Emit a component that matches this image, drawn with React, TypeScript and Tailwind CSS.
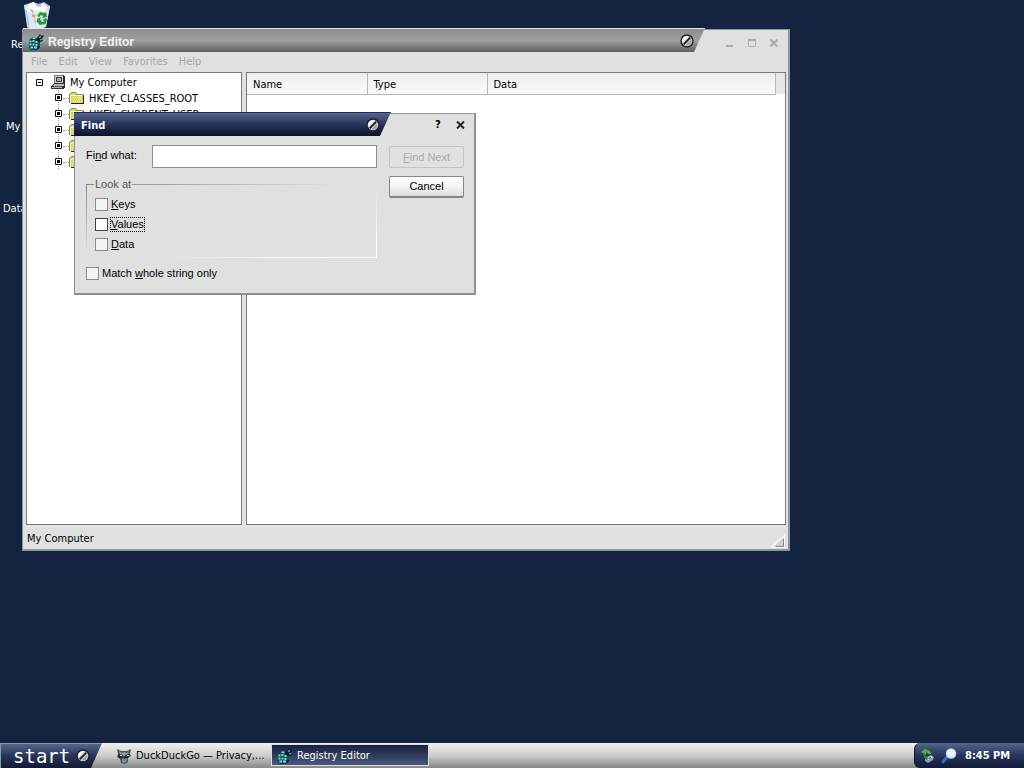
import React from 'react';

const hives = ['HKEY_CLASSES_ROOT', 'HKEY_CURRENT_USER', '', '', ''];

function RegistryIcon() {
  return (
    <svg width="16" height="16" viewBox="0 0 16 16" aria-hidden="true" className="shrink-0">
      <path d="M1 6l4-3 6 2v10l-2 1H3l-2-2z" fill="#0b4650" />
      <path d="M4.500 3.500h3v1.500h-3zM1.500 6.500h2v2h-2zM4.500 6h2v2h-2zM7.500 7h2v2h-2zM1.500 9.500h2v2h-2zM4.500 9.500h2v2h-2zM7.500 10h2v2h-2zM2.500 12.500h2.500v2H2.500zM6 12.500h3v2H6z" fill="#79e4e8" />
      <path d="M9 4l3-4 1 2 3-1-2 4 1 2-3 1v5l-2 2V7l-2-1z" fill="#0c1d24" />
      <path d="M11 4l1-2 1 1zM12 6l2-1v1zM11 8v4" fill="#7ad6da" stroke="#4fa9b0" strokeWidth=".7" />
    </svg>
  );
}

function SlashBadge() {
  return (
    <svg width="14" height="14" viewBox="0 0 14 14" aria-hidden="true" className="shrink-0">
      <circle cx="7" cy="7" r="6.700" fill="#1d2028" />
      <circle cx="7" cy="7" r="5.300" fill="#c9cccd" />
      <path d="M2.500 8.500a4.700 4.700 0 0 1 6-6z" fill="#fff" />
      <path d="M3.700 10.300l6.600-6.600" stroke="#16181f" strokeWidth="1.700" />
      <path d="M11.300 5.800a4.600 4.600 0 0 1-5.500 5.500z" fill="#9b9f9f" />
    </svg>
  );
}

function ComputerIcon() {
  return (
    <svg width="16" height="14" viewBox="0 0 16 14" shapeRendering="crispEdges" aria-hidden="true" className="shrink-0">
      <path d="M3 0h9l2 2v7h-1v1H3z" fill="#2b2b2b" />
      <path d="M3 0h9v1H4v7H3z" fill="#777" />
      <path d="M4 1h8v7H4z" fill="#d2d2ce" />
      <path d="M5 2h6v5H5z" fill="#3c4344" />
      <path d="M6 3h4v3H6z" fill="#a3adad" />
      <path d="M2 9h12v3l-1 2H0v-2z" fill="#333" />
      <path d="M3 9h10v2H2v1h9v1H1v-1h1z" fill="#b9b9b4" />
      <path d="M3 11h8v1H3z" fill="#555" />
    </svg>
  );
}

function FolderIcon() {
  return (
    <svg width="16" height="14" viewBox="0 0 16 14" shapeRendering="crispEdges" aria-hidden="true" className="shrink-0">
      <path d="M1 3h1V2h5v1h1v1h7v9H2v-1H1z" fill="#222" />
      <path d="M0 3h1V2h1V1h5v1h1v1h6v9H0z" fill="#84874f" />
      <path d="M2 2h5v2h7v8H1V3h1z" fill="#d8dc6c" />
      <path d="M1 4h12v1H2v7H1z" fill="#f8fab8" />
      <path d="M4 6h1v1H4zM6 6h1v1H6zM8 6h1v1H8zM10 6h1v1h-1zM12 6h1v1h-1zM5 8h1v1H5zM7 8h1v1H7zM9 8h1v1H9zM11 8h1v1h-1zM4 10h1v1H4zM6 10h1v1H6zM8 10h1v1H8zM10 10h1v1h-1zM12 10h1v1h-1z" fill="#f4f59a" />
    </svg>
  );
}

function ExpandIcon() {
  return (
    <svg width="9" height="16" viewBox="0 0 9 16" aria-hidden="true" className="shrink-0">
      <path d="M4 0h1v1H4zM4 2h1v1H4zM4 12h1v1H4zM4 14h1v1H4z" fill="#999" />
      <path d="M1.500 4.500h6v6h-6z" fill="#fff" stroke="#111" strokeWidth="1" />
      <path d="M3 6h3v3H3z" fill="#000" />
    </svg>
  );
}

function RecycleBin() {
  return (
    <svg width="28" height="28" viewBox="0 0 28 28" aria-hidden="true">
      <path d="M1 4l9-3 6 2 5-2 6 4-4 21-4 2H7l-3-2z" fill="#b6cce8" />
      <path d="M1 4l7 2 17 0 2-1-4 20-4 2H7l-2-2z" fill="#dce9f6" />
      <path d="M5 4l6-3 3 5 6-4 4 4-3 5-7-2-5 3-4-2z" fill="#fff" />
      <path d="M6 8l5 1-1 4zM13 5l4-3 2 4z" fill="#a9bed9" />
      <path d="M9 13l4 1-1 3-3-1z" fill="#e8b24c" />
      <path d="M11 18l3 2-2 3z" fill="#d9a6d4" />
      <path d="M14 15l3-4 5 1 1-1 1 5-5 1 1-2-2-1-2 2zM14 18l4-2-1 2 2 3 3-1 1 3-6 1-3-3zM22 17l2 1-1 4-3-3z" fill="#239b36" />
      <path d="M3 9l3 16" stroke="#9fc0e2" />
    </svg>
  );
}

function RaccoonIcon() {
  return (
    <svg width="16" height="16" viewBox="0 0 16 16" aria-hidden="true" className="shrink-0">
      <path d="M1 1l4 2h6l4-2-1 5 1 2-3 2v4l-3 2-4-1-1-4-3-2 1-3z" fill="#44575a" />
      <path d="M3 3l3 2 2-1 3 1 2-2-1 3-4 2-4-2z" fill="#93a09f" />
      <path d="M2 6l5 1-1 3-3 0zM9 7l5-1-2 4-3 0z" fill="#15292c" />
      <path d="M4 7h2v1H4zM11 7h2v1h-2z" fill="#e8f3e9" />
      <path d="M6 11l5-1v3l-2 2-3-1z" fill="#7e8d8c" />
      <path d="M7 9l3 0-1 2z" fill="#14282b" />
    </svg>
  );
}

function SafelyRemoveIcon() {
  return (
    <svg width="14" height="15" viewBox="0 0 14 15" aria-hidden="true">
      <path d="M4 10l6-3 3 2-1 3-5 3-3-2z" fill="#8c9a9c" />
      <path d="M5 10l5-2 2 1-5 3z" fill="#e4eaea" />
      <path d="M7 10l3-1v1l-2 1z" fill="#3c4648" />
      <path d="M0 4l5-4v2c3 0 5 1 5 4H7c0-1-1-2-2-1v2z" fill="#45b647" />
      <path d="M2 5l5 5-1 2-3-3z" fill="#208038" />
    </svg>
  );
}

function MagnifierIcon() {
  return (
    <svg width="16" height="16" viewBox="0 0 16 16" aria-hidden="true">
      <path d="M6 9l-4 5" stroke="#4661d4" strokeWidth="3" strokeLinecap="round" />
      <circle cx="10" cy="5.500" r="5.300" fill="#b9d8f2" />
      <circle cx="10" cy="5.500" r="3.900" fill="#eaf7ff" />
    </svg>
  );
}

function Check({ id, children, focused }: { id: string; children: React.ReactNode; focused?: boolean }) {
  return (
    <div className="flex h-5 items-center gap-0.5">
      <input
        id={id}
        type="checkbox"
        className={
          focused
            ? 'size-[13px] appearance-none border border-[#444] bg-white checked:bg-[#555]'
            : 'size-[13px] appearance-none border border-[#8b8d8c] bg-[#f3f4f4] checked:bg-[#555]'
        }
      />
      <label
        htmlFor={id}
        className={
          focused
            ? 'border border-dotted border-black leading-[13px]'
            : 'border border-transparent leading-[13px]'
        }
      >
        {children}
      </label>
    </div>
  );
}

function FindDialog() {
  return (
    <section
      role="dialog"
      aria-labelledby="find-title"
      className="absolute left-[74px] top-[113px] z-10 w-[402px] border border-b-2 border-r-2 border-[#8e9191] bg-[#dfe0e0] font-['Liberation_Sans',sans-serif] text-[11px] text-black"
    >
      <header className="-ml-px -mt-0.5 flex h-6 items-center">
        <div className="flex h-6 w-[317px] items-center justify-between border-t border-[#202c50] bg-linear-to-b from-[#56658f] via-[#26345c] to-[#0b1228] pl-[7px] pr-[11px] [clip-path:polygon(0_0,100%_0,calc(100%-11px)_100%,0_100%)]">
          <h2 id="find-title" className="pt-1 font-['DejaVu_Sans_Condensed','DejaVu_Sans',sans-serif] text-[11px] font-bold text-white">
            Find
          </h2>
          <SlashBadge />
        </div>
        <div className="ml-auto flex items-center gap-3 pr-2 pt-0.5">
          <button aria-label="Help" className="w-2 font-['DejaVu_Sans',sans-serif] text-[10px] font-bold leading-3">
            ?
          </button>
          <button aria-label="Close" className="flex w-3 justify-center">
            <svg width="9" height="8" viewBox="0 0 9 8" aria-hidden="true">
              <path d="M1 .5l7 7M8 .5l-7 7" stroke="#222" strokeWidth="2" />
            </svg>
          </button>
        </div>
      </header>
      <form className="flex gap-3 pb-2.5 pl-[11px] pr-2.5 pt-[9px]">
        <div className="flex-1">
          <div className="flex items-center">
            <label htmlFor="find-what" className="w-[66px] pb-0.5">
              Fi<u>n</u>d what:
            </label>
            <input id="find-what" type="text" className="h-[23px] min-w-0 flex-1 border border-[#8d908f] bg-white px-1 outline-none" />
          </div>
          <fieldset className="mt-2.5 h-20 bg-[linear-gradient(to_right,#858786,#dfe0e0),linear-gradient(to_bottom,#858786,#dfe0e0),linear-gradient(to_left,#fff_20%,#dfe0e0),linear-gradient(to_top,#fff_20%,#dfe0e0)] bg-no-repeat pl-2 [background-position:0_6px,0_6px,100%_100%,100%_100%] [background-size:250px_1px,1px_68px,220px_1px,1px_70px]">
            <legend className="float-left bg-[#dfe0e0] px-px leading-3 text-[#555]">Look at</legend>
            <div className="clear-both pl-px pt-1">
              <Check id="look-keys">
                <u>K</u>eys
              </Check>
              <Check id="look-values" focused>
                <u>V</u>alues
              </Check>
              <Check id="look-data">
                <u>D</u>ata
              </Check>
            </div>
          </fieldset>
          <div className="pt-[5px]">
            <Check id="match-whole">
              Match <u>w</u>hole string only
            </Check>
          </div>
        </div>
        <div className="flex w-[75px] flex-col gap-2 pt-px">
          <button type="button" disabled className="h-[22px] rounded-xs border border-[#c5c7c6] bg-[#e0e1e1] text-[#aaa]">
            <u>F</u>ind Next
          </button>
          <button
            type="button"
            className="h-[22px] rounded-xs border border-b-2 border-[#858686] bg-linear-to-b from-white via-[#f4f4f4] to-[#dcdddd]"
          >
            Cancel
          </button>
        </div>
      </form>
    </section>
  );
}

function RegistryWindow() {
  return (
    <section
      aria-labelledby="reg-title"
      className="absolute left-[22px] top-[29px] flex h-[522px] w-[768px] flex-col border-2 border-l border-t border-[#8b979e] bg-[#dfe1e0] pl-[3px] pr-0.5"
    >
      <header className="-ml-[3px] -mr-0.5 -mt-0.5 flex h-6 shrink-0 items-center">
        <div className="flex h-6 w-[682px] items-center justify-between border-t border-[#e4e6e5] bg-linear-to-b from-[#8b8d8c] via-[#a0a2a1] to-[#5f6160] pl-[5px] pr-[11px] [clip-path:polygon(0_0,100%_0,calc(100%-11px)_100%,0_100%)]">
          <div className="flex items-center gap-1 pt-0.5">
            <RegistryIcon />
            <h1 id="reg-title" className="font-['Liberation_Sans',sans-serif] text-xs font-bold text-[#f2f2f2]">
              Registry Editor
            </h1>
          </div>
          <SlashBadge />
        </div>
        <div className="ml-auto flex items-center gap-3.5 pr-2.5 pt-1.5 text-[#a9abab]">
          <button aria-label="Minimize">
            <svg width="8" height="8" viewBox="0 0 8 8" aria-hidden="true">
              <path d="M0 6h7v2H0z" fill="currentColor" />
            </svg>
          </button>
          <button aria-label="Maximize">
            <svg width="8" height="8" viewBox="0 0 8 8" aria-hidden="true">
              <path d="M.5 1h7v6.500h-7z" fill="none" stroke="currentColor" />
              <path d="M0 0h8v2H0z" fill="currentColor" />
            </svg>
          </button>
          <button aria-label="Close">
            <svg width="8" height="8" viewBox="0 0 8 8" aria-hidden="true">
              <path d="M.5.5l7 7M7.500.5l-7 7" stroke="currentColor" strokeWidth="2" />
            </svg>
          </button>
        </div>
      </header>
      <nav className="flex h-5 shrink-0 items-center gap-[11px] pl-[5px] text-[11px] text-[#a7a9a9]">
        <button>File</button>
        <button>Edit</button>
        <button>View</button>
        <button>Favorites</button>
        <button>Help</button>
      </nav>
      <div className="flex min-h-0 flex-1 gap-1">
        <div className="w-[216px] shrink-0 overflow-hidden border border-[#77797a] bg-white pl-2 pt-px">
          <div className="flex h-4 items-center gap-[7px]">
            <svg width="9" height="9" viewBox="0 0 9 9" aria-hidden="true" className="shrink-0">
              <path d="M1.500 1.500h6v6h-6z" fill="#fff" stroke="#111" />
              <path d="M3 4h3v1H3z" fill="#000" />
            </svg>
            <div className="flex items-center gap-[3px]">
              <ComputerIcon />
              <span className="pt-0.5">My Computer</span>
            </div>
          </div>
          <ul className="pl-[19px]">
            {hives.map((h, i) => (
              <li key={i} className="flex h-4 items-center">
                <ExpandIcon />
                <span className="w-1.5 shrink-0 border-t border-dotted border-[#999]" />
                <FolderIcon />
                <span className="whitespace-nowrap pl-1 pt-0.5">{h}</span>
              </li>
            ))}
          </ul>
        </div>
        <div className="min-w-0 flex-1 border border-[#77797a] bg-white">
          <table className="w-full table-fixed border-collapse text-left">
            <thead>
              <tr className="h-[21px] bg-linear-to-b from-[#ececec] to-[#fbfbfb]">
                <th className="w-[120px] border-b border-r border-[#b5b7b7] px-1.5 pt-1 font-normal">Name</th>
                <th className="w-[120px] border-b border-r border-[#b5b7b7] px-1.5 pt-1 font-normal">Type</th>
                <th className="border-b border-r border-[#b5b7b7] px-1.5 pt-1 font-normal">Data</th>
                <td className="w-[10px] bg-[#e6e7e7]" />
              </tr>
            </thead>
          </table>
        </div>
      </div>
      <footer className="mt-px flex h-[23px] shrink-0 items-center justify-between border-t border-[#eceeed] pl-px">
        <span className="pt-0.5">My Computer</span>
        <svg width="16" height="16" viewBox="0 0 16 16" aria-hidden="true" className="self-end">
          <path d="M15 1v14H0z" fill="#f7f8f8" />
          <path d="M14 4v10H3z" fill="#ccd0ce" />
          <path d="M13.500 6v7.500H6" fill="none" stroke="#858a88" />
        </svg>
      </footer>
    </section>
  );
}

export default function App() {
  return (
    <div className="flex h-screen flex-col overflow-hidden bg-[#14233f] font-['DejaVu_Sans_Condensed','DejaVu_Sans',sans-serif] text-[11px] text-black">
      <main className="relative min-h-0 flex-1">
        <div className="absolute left-[11px] top-px flex w-[52px] flex-col items-center gap-[9px] whitespace-nowrap text-white">
          <RecycleBin />
          <span className="self-start leading-[14px]">Re</span>
        </div>
        <span className="absolute left-1.5 top-[120px] leading-[14px] text-white">My</span>
        <span className="absolute left-[3px] top-[202px] leading-[14px] text-white">Data</span>
        <RegistryWindow />
        <FindDialog />
      </main>
      <footer className="flex h-[25px] shrink-0 items-stretch bg-linear-to-b from-[#f0f1ef] via-[#cdcecc] to-[#858887]">
        <button className="flex w-[102px] items-center gap-1.5 border-l border-t border-[#8a97b5] bg-linear-to-b from-[#56658a] via-[#27355d] to-[#111933] pl-3 text-white [clip-path:polygon(0_0,100%_0,calc(100%-11px)_100%,0_100%)]">
          <span className="w-[57px] font-['DejaVu_Sans_Mono',monospace] text-[19px] leading-5">start</span>
          <SlashBadge />
        </button>
        <button className="ml-3.5 flex w-[155px] items-center gap-1">
          <RaccoonIcon />
          <span className="whitespace-nowrap pt-px">DuckDuckGo — Privacy,...</span>
        </button>
        <button className="mb-0.5 mt-px flex w-[158px] items-center gap-1 border border-[#d9dce2] bg-linear-to-b from-[#17203f] to-[#4c5878] pl-[5px] pt-px text-white">
          <RegistryIcon />
          <span className="whitespace-nowrap pt-px">Registry Editor</span>
        </button>
        <div className="ml-auto flex w-[110px] items-center gap-1.5 rounded-l-md border-l border-[#0c1123] bg-linear-to-b from-[#56658a] via-[#27355d] to-[#111933] pl-1.5 text-white">
          <SafelyRemoveIcon />
          <MagnifierIcon />
          <span className="whitespace-nowrap pl-0.5 pt-0.5 font-bold">8:45 PM</span>
        </div>
      </footer>
    </div>
  );
}
